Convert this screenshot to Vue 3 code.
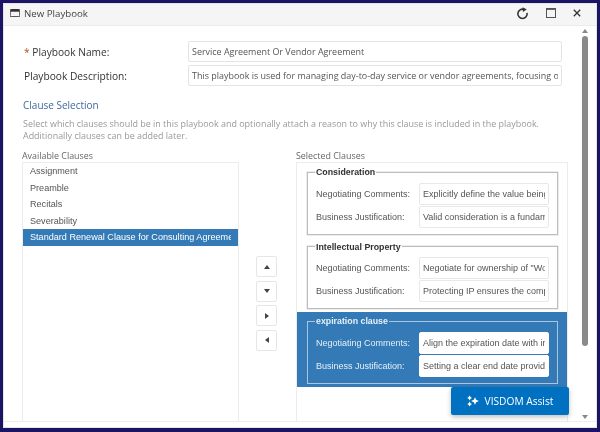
<template>
  <div class="frame">
    <div class="dialog">
      <div class="titlebar">
        <svg class="win-icon" viewBox="0 0 10 8" width="10" height="8">
          <path d="M1.2 0.5h7.6a1 1 0 0 1 1 1v5.2a1 1 0 0 1-1 1H1.2a1 1 0 0 1-1-1V1.5a1 1 0 0 1 1-1z" fill="none" stroke="#333" stroke-width="1" />
          <rect x="0.5" y="0.5" width="9" height="2.2" fill="#333" />
        </svg>
        <span class="title">New Playbook</span>
        <svg class="tool tool-refresh" viewBox="0 0 14 14" width="13" height="13">
          <path d="M8.6 2.6A5 5 0 1 0 11.9 6.4" fill="none" stroke="#333" stroke-width="1.7" />
          <path d="M7.2 0.2L11.6 2.6L7.4 5.4z" fill="#333" />
        </svg>
        <svg class="tool tool-max" viewBox="0 0 10 10" width="10" height="10">
          <rect x="0.5" y="0.5" width="9" height="9" fill="none" stroke="#555" stroke-width="1" />
          <rect x="0.5" y="0.5" width="9" height="1.4" fill="#555" />
        </svg>
        <svg class="tool tool-close" viewBox="0 0 8 8" width="8" height="8">
          <path d="M0.8 0.8L7.2 7.2M7.2 0.8L0.8 7.2" stroke="#333" stroke-width="1.3" />
        </svg>
      </div>

      <div class="body">
        <div class="main">
          <div class="form-row">
            <label class="form-label"><span class="req">*</span> Playbook Name:</label>
            <input class="form-input" value="Service Agreement Or Vendor Agreement" />
          </div>
          <div class="form-row">
            <label class="form-label">Playbook Description:</label>
            <input class="form-input" value="This playbook is used for managing day-to-day service or vendor agreements, focusing on clear terms" />
          </div>

          <div class="section-title">Clause Selection</div>
          <p class="help">
            Select which clauses should be in this playbook and optionally attach a reason to why this clause is included in the playbook.
            <br />Additionally clauses can be added later.
          </p>

          <div class="columns">
            <div class="col-available">
              <div class="col-label">Available Clauses</div>
              <ul class="clause-list">
                <li
                  v-for="item in available"
                  :key="item"
                  class="clause-item"
                  :class="{ active: item === activeClause }">
                  <span>{{ item }}</span>
                </li>
              </ul>
            </div>

            <div class="move-buttons">
              <button v-for="dir in directions" :key="dir" class="move-btn">
                <span class="tri" :class="'tri-' + dir"></span>
              </button>
            </div>

            <div class="col-selected">
              <div class="col-label">Selected Clauses</div>
              <div class="selected-box">
                <div
                  v-for="clause in selected"
                  :key="clause.name"
                  class="clause-block"
                  :class="{ active: clause.active }">
                  <fieldset class="clause-set">
                    <legend>{{ clause.name }}</legend>
                    <div class="set-row">
                      <label>Negotiating Comments:</label>
                      <input class="set-input" :value="clause.comments" />
                    </div>
                    <div class="set-row">
                      <label>Business Justification:</label>
                      <input class="set-input" :value="clause.reason" />
                    </div>
                  </fieldset>
                </div>
              </div>
            </div>
          </div>
        </div>

        <div class="scrollbar">
          <span class="arrow-up"></span>
          <div class="thumb-track"><div class="thumb"></div></div>
          <span class="arrow-down"></span>
        </div>

        <button class="assist-btn">
          <svg viewBox="0 0 12 12" width="12" height="12">
            <path d="M8 2.2L9.2 4.8L11.9 6L9.2 7.2L8 9.8L6.8 7.2L4.1 6L6.8 4.8z" fill="#fff" />
            <path d="M2.6 0.4L3.5 2L5 2.9L3.5 3.8L2.6 5.4L1.7 3.8L0.2 2.9L1.7 2z" fill="#fff" />
            <path d="M2.6 6.6L3.5 8.2L5 9.1L3.5 10L2.6 11.6L1.7 10L0.2 9.1L1.7 8.2z" fill="#fff" />
          </svg>
          <span>VISDOM Assist</span>
        </button>
      </div>
      <div class="footer"></div>
    </div>
  </div>
</template>

<script setup>
const activeClause = 'Standard Renewal Clause for Consulting Agreements'

const available = [
  'Assignment',
  'Preamble',
  'Recitals',
  'Severability',
  'Standard Renewal Clause for Consulting Agreements'
]

const directions = ['up', 'down', 'right', 'left']

const selected = [
  {
    name: 'Consideration',
    comments: 'Explicitly define the value being exchanged',
    reason: 'Valid consideration is a fundamental element'
  },
  {
    name: 'Intellectual Property',
    comments: 'Negotiate for ownership of "Work Product"',
    reason: 'Protecting IP ensures the company keeps rights'
  },
  {
    name: 'expiration clause',
    comments: 'Align the expiration date with internal cycles',
    reason: 'Setting a clear end date provides certainty',
    active: true
  }
]
</script>

<style>
body {
  margin: 0;
  background: #fff;
}
</style>

<style scoped>
.frame {
  width: 600px;
  height: 432px;
  box-sizing: border-box;
  border: 3px solid #1b1464;
  border-bottom-width: 4px;
  overflow: hidden;
  font-family: "Open Sans", "Liberation Sans", sans-serif;
  filter: blur(0.3px);
}

.dialog {
  height: 100%;
  display: flex;
  flex-direction: column;
  background: #fff;
  border: 1px solid #e4e4e4;
  box-sizing: border-box;
}

.titlebar {
  flex: none;
  height: 22px;
  box-sizing: border-box;
  display: flex;
  align-items: center;
  padding: 0 0 3px 6px;
  background: #f5f5f5;
  border-bottom: 1px solid #ebebeb;
}

.win-icon {
  margin-right: 4px;
}

.title {
  flex: 1;
  font-size: 9.7px;
  color: #444;
}

.tool-refresh {
  margin-right: 17px;
}

.tool-max {
  margin-right: 17px;
}

.tool-close {
  margin-right: 15px;
}

.body {
  flex: 1;
  min-height: 0;
  display: flex;
  position: relative;
}

.main {
  flex: 1;
  min-width: 0;
  padding: 15px 0 0 20px;
  display: flex;
  flex-direction: column;
}

.form-row {
  display: flex;
  align-items: center;
  margin-bottom: 3px;
}

.form-label {
  width: 164px;
  font-size: 10.2px;
  font-weight: 500;
  color: #333;
}

.req {
  color: #a5552a;
}

.form-input {
  width: 374px;
  height: 21px;
  box-sizing: border-box;
  padding: 0 3px;
  border: 1px solid #e4e4e4;
  border-radius: 2px;
  font-family: inherit;
  font-size: 8.95px;
  color: #555;
  outline: none;
}

.section-title {
  margin: 9px 0 0 -1px;
  font-size: 10px;
  line-height: 15px;
  color: #3f6a9c;
}

.help {
  margin: 5px 0 0 -1px;
  font-size: 8.95px;
  line-height: 12px;
  color: #999;
}

.columns {
  flex: 1;
  min-height: 0;
  margin: 8px 0 0 -2px;
  display: flex;
}

.col-label {
  height: 12px;
  font-size: 8.9px;
  line-height: 12px;
  color: #666;
}

.col-available,
.col-selected {
  display: flex;
  flex-direction: column;
}

.col-available {
  width: 217px;
}

.col-selected {
  width: 272px;
}

.clause-list {
  flex: 1;
  margin: 0;
  padding: 0;
  list-style: none;
  border: 1px solid #ececec;
  border-bottom: none;
}

.clause-item {
  height: 16.5px;
  padding: 0 7px;
  font-family: "Liberation Sans", Arial, sans-serif;
  font-size: 9.1px;
  line-height: 16.5px;
  color: #555;
  overflow: hidden;
  white-space: nowrap;
}

.clause-item span {
  display: block;
  overflow: hidden;
}

.clause-item.active {
  background: #337ab7;
  color: #fff;
}

.move-buttons {
  width: 57px;
  padding: 106px 0 0 17px;
  box-sizing: border-box;
  display: flex;
  flex-direction: column;
  gap: 3.6px;
}

.move-btn {
  width: 21px;
  height: 21px;
  padding: 0;
  display: flex;
  align-items: center;
  justify-content: center;
  background: #fff;
  border: 1px solid #e6e6e6;
  border-radius: 2px;
}

.tri {
  width: 0;
  height: 0;
  border: 2.5px solid transparent;
}

.tri-up {
  border-bottom: 4px solid #444;
  border-top: none;
  border-left-width: 3px;
  border-right-width: 3px;
}

.tri-down {
  border-top: 4px solid #444;
  border-bottom: none;
  border-left-width: 3px;
  border-right-width: 3px;
}

.tri-right {
  border-left: 4px solid #444;
  border-right: none;
  border-top-width: 3px;
  border-bottom-width: 3px;
}

.tri-left {
  border-right: 4px solid #444;
  border-left: none;
  border-top-width: 3px;
  border-bottom-width: 3px;
}

.selected-box {
  flex: 1;
  min-height: 0;
  border: 1px solid #ececec;
  border-bottom: none;
  overflow: hidden;
}

.clause-block {
  padding: 3px 9px 3px 10px;
}

.clause-block.active {
  background: #337ab7;
}

.clause-set {
  margin: 0;
  padding: 4.5px 8px 5px 8px;
  border: 1px solid #bdbdbd;
  box-shadow: 0 0 0 0.5px #d8d8d8;
  font-family: "Liberation Sans", Arial, sans-serif;
}

.clause-set legend {
  margin-left: -1px;
  padding: 0 1px;
  font-size: 8.8px;
  line-height: 12px;
  font-weight: 700;
  color: #333;
}

.set-row {
  display: flex;
  align-items: center;
  margin-bottom: 1px;
}

.set-row label {
  width: 103px;
  font-size: 9px;
  color: #555;
}

.set-input {
  width: 130px;
  height: 22px;
  box-sizing: border-box;
  padding: 0 3px;
  border: 1px solid #e8e8e8;
  border-radius: 2px;
  font-family: inherit;
  font-size: 9px;
  color: #555;
  outline: none;
}

.active .clause-set {
  border-color: #a9c6e0;
  box-shadow: none;
}

.active legend,
.active .set-row label {
  color: #e6eff7;
}

.active .set-input {
  border-color: #fff;
}

.scrollbar {
  flex: none;
  width: 22px;
  display: flex;
  flex-direction: column;
  align-items: center;
  padding: 3px 0 2px;
  box-sizing: border-box;
}

.arrow-up,
.arrow-down {
  width: 0;
  height: 0;
  border-left: 3px solid transparent;
  border-right: 3px solid transparent;
}

.arrow-up {
  border-bottom: 4px solid #888;
}

.arrow-down {
  border-top: 4px solid #888;
}

.thumb-track {
  flex: 1;
  padding-top: 3px;
}

.thumb {
  width: 6px;
  height: 310px;
  border-radius: 3px;
  background: #8a8a8a;
}

.assist-btn {
  position: absolute;
  right: 27px;
  bottom: 6px;
  width: 118px;
  height: 28px;
  display: flex;
  align-items: center;
  justify-content: center;
  gap: 6px;
  border: none;
  border-radius: 2px;
  background: #0070c0;
  color: #fff;
  font-family: inherit;
  font-size: 10.2px;
  box-shadow: 0 2px 5px rgba(0, 0, 0, 0.25);
}

.footer {
  flex: none;
  height: 5px;
  border-top: 1px solid #ededed;
}
</style>
